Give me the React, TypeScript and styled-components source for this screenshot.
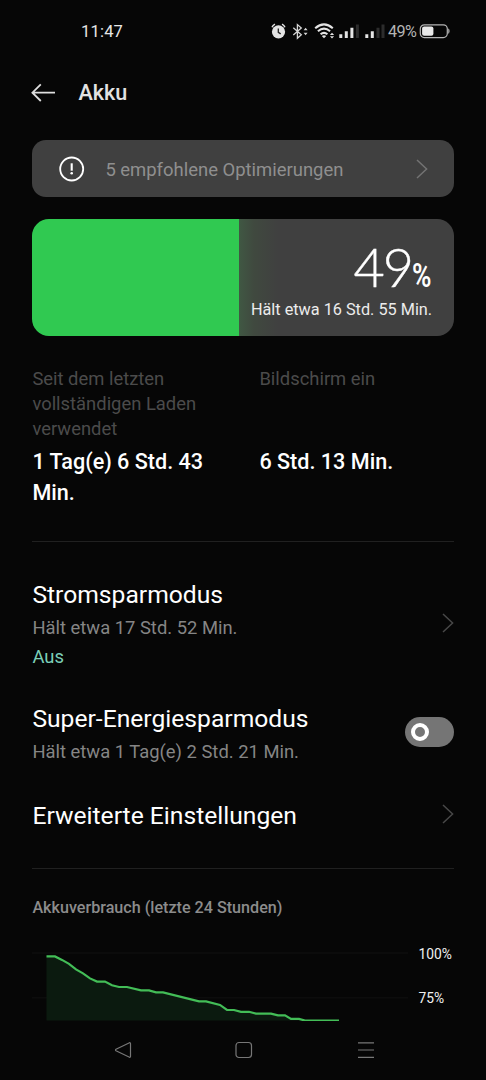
import React from 'react';
import styled, { createGlobalStyle } from 'styled-components';

const Global = createGlobalStyle`
  * { box-sizing: border-box; }
  html, body { margin: 0; background: #060606; }
  svg { display: block; flex: none; }
`;

const Screen = styled.main`
  width: 486px;
  height: 1080px;
  overflow: hidden;
  display: flex;
  flex-direction: column;
  background: #060606;
  color: #fff;
  font-family: Roboto, "Liberation Sans", sans-serif;
`;

const StatusBar = styled.div`
  height: 62px;
  flex: none;
  display: flex;
  align-items: center;
  justify-content: space-between;
  padding: 0 35px 0 81px;
`;

const Clock = styled.span`
  font-size: 16.5px;
  letter-spacing: 0.2px;
  color: #e6e6e6;
`;

const StatusIcons = styled.div`
  display: flex;
  align-items: center;
`;

const StatusPercent = styled.span`
  font-size: 16.2px;
  width: 31px;
  letter-spacing: -0.6px;
  color: #b4b4b4;
`;

const Header = styled.header`
  height: 62px;
  flex: none;
  display: flex;
  align-items: center;
  gap: 22.5px;
  padding-left: 31px;
`;

const Title = styled.h1`
  margin: 0;
  font-size: 21.6px;
  line-height: 26px;
  font-weight: 500;
  color: #e2e2e2;
`;

const Content = styled.div`
  display: flex;
  flex-direction: column;
  flex: none;
  padding: 16px 32.4px 0;
`;

const Banner = styled.div`
  height: 57.4px;
  display: flex;
  align-items: center;
  padding: 0 26px 0 26.2px;
  border-radius: 14px;
  background: #404040;
`;

const BannerText = styled.span`
  flex: 1;
  margin-left: 20.8px;
  font-size: 18.45px;
  line-height: 24px;
  padding-top: 2px;
  color: #8f8f8f;
`;

const BatteryCard = styled.section`
  height: 117px;
  margin-top: 22px;
  display: flex;
  flex-direction: column;
  align-items: flex-end;
  padding: 21px 21.5px 0 0;
  border-radius: 17px;
  background: linear-gradient(
    90deg,
    #30c951 0 207px,
    #405843 207px,
    #40493f 222px,
    #404040 246px
  );
`;

const Level = styled.div`
  display: flex;
  align-items: baseline;
  height: 54px;
  line-height: 54px;
`;

const LevelNumber = styled.span`
  font-family: Lato, Roboto, sans-serif;
  font-size: 54px;
  font-weight: 300;
  letter-spacing: -2px;
  -webkit-text-stroke: 0.4px #fff;
`;

const LevelUnit = styled.span`
  width: 20px;
  font-family: Roboto, sans-serif;
  font-size: 33px;
  font-weight: 600;
  transform: scaleX(0.8);
  transform-origin: left;
`;

const Remaining = styled.div`
  font-size: 16.25px;
  line-height: 24px;
  margin-top: 3.5px;
  color: #ececec;
`;

const Stats = styled.section`
  display: grid;
  grid-template-columns: 227px 1fr;
  margin-top: 29.8px;
`;

const Stat = styled.div<{ $width: number }>`
  display: flex;
  flex-direction: column;
  max-width: ${(p) => p.$width}px;
`;

const StatLabel = styled.div`
  height: 79.5px;
  font-size: 18.4px;
  line-height: 25px;
  color: #4b4b4b;
`;

const StatValue = styled.div`
  font-size: 21.6px;
  line-height: 31.5px;
  font-weight: 500;
`;

const Divider = styled.hr<{ $top: number }>`
  width: 100%;
  height: 1px;
  border: 0;
  margin: ${(p) => p.$top}px 0 0;
  background: #202020;
`;

const Row = styled.div<{ $top: number }>`
  display: flex;
  align-items: center;
  justify-content: space-between;
  margin-top: ${(p) => p.$top}px;
`;

const RowText = styled.div`
  display: flex;
  flex-direction: column;
`;

const RowAction = styled.div<{ $lift?: number }>`
  padding-bottom: ${(p) => p.$lift ?? 3}px;
`;

const RowTitle = styled.div`
  font-size: 24.65px;
  line-height: 36px;
`;

const RowSub = styled.div`
  font-size: 18.4px;
  line-height: 29.5px;
  color: #858585;
`;

const RowState = styled(RowSub)`
  color: #7bcfb8;
`;

const Switch = styled.div`
  width: 49px;
  height: 30px;
  display: flex;
  align-items: center;
  padding-left: 6px;
  border-radius: 15px;
  background: #757575;
`;

const Knob = styled.span`
  width: 18px;
  height: 18px;
  border-radius: 50%;
  border: 4px solid #fff;
`;

const ChartTitle = styled.h2`
  margin: 27px 0 0;
  font-size: 16.15px;
  line-height: 24px;
  font-weight: 500;
  color: #8c8c8c;
`;

const Chart = styled.div`
  display: flex;
  margin-top: 24.2px;
`;

const ChartLabels = styled.div`
  display: flex;
  flex-direction: column;
  margin-left: 10px;
  padding-top: 0.8px;
  font-size: 13.8px;
  line-height: 18px;
  gap: 26.2px;
  color: #f0f0f0;
`;

const NavBar = styled.nav`
  flex: 1;
  display: flex;
  align-items: center;
  justify-content: center;
  gap: 103.6px;
  padding-left: 2.6px;
`;

const Chevron = ({ color = '#484848' }: { color?: string }) => (
  <svg width="12" height="20" viewBox="0 0 12 20" fill="none" stroke={color} strokeWidth="1.5">
    <path d="M1 1l9.6 9L1 19" />
  </svg>
);

const points: [number, number][] = [
  [46.5, 956], [55, 956], [62, 959.5], [69, 963.5], [76, 969], [83, 973], [90, 978], [97, 981.2],
  [105, 981.2], [112, 984.8], [119, 986.6], [127, 986.6], [141, 990], [149, 990], [156, 992],
  [163, 992], [199, 1001], [206, 1001], [220, 1004.5], [227, 1009.6], [234, 1009.6], [241, 1011.4],
  [249, 1011.4], [256, 1013.2], [271, 1013.2], [278, 1015], [285, 1015], [291, 1018.5],
  [299, 1018.5], [305, 1020.2], [339, 1020.2],
];
const line = points.map(([x, y]) => `${x - 32},${y - 943.6}`).join(' ');

export default function App() {
  return (
    <Screen>
      <Global />
      <StatusBar>
        <Clock>11:47</Clock>
        <StatusIcons>
          <svg width="118" height="20" viewBox="270 21 118 20" fill="none">
            <circle cx="278.5" cy="31.8" r="6.6" fill="#e4e4e4" />
            <path d="M278.3 28.5v3.8l2.4 1.6" stroke="#222" strokeWidth="1.3" />
            <path d="M272 27.3q.8-2.2 3-3.2M285 27.3q-.8-2.2-3-3.2" stroke="#e4e4e4" strokeWidth="1.4" />
            <path d="M293.3 27.8l8 7-3.9 3.4V24.6l3.9 3.4-8 7" stroke="#d4d4d4" strokeWidth="1.3" />
            <path d="M303.6 30.2l2-2.4 2 2.400zM303.600 32.800l2 2.400 2-2.400z" fill="#d4d4d4" />
            <g stroke="#e4e4e4" strokeWidth="2.1">
              <path d="M315.2 28.2q8.8-7.6 17.6 0M317.9 31.3q6.100-5.200 12.200 0M320.600 34.200q3.400-2.800 6.800 0" />
            </g>
            <path d="M321.800 36q2.200-1.500 4.400 0l-2.200 2.300z" fill="#e4e4e4" />
            <path d="M329.900 35l2.100-2.300 2.100 2.300zM329.900 36.300l2.100 2.300 2.100-2.300z" fill="#e4e4e4" />
            <g fill="#e4e4e4">
              <path d="M339.300 34.300h3v3.800h-3zM344.800 31.300h3v6.800h-3zM350.400 27.800h3v10.300h-3z" />
              <path d="M365.300 34.300h3v3.800h-3zM370.800 31.300h3v6.800h-3z" />
            </g>
            <path d="M355.900 24.500h3v13.600h-3zM376.500 27.800h3v10.300h-3zM381.500 24.500h3v13.600h-3z" fill="#2c2c2c" />
          </svg>
          <StatusPercent>49%</StatusPercent>
          <svg width="32" height="16" viewBox="0 0 32 16" fill="none">
            <rect x="1.300" y="1.800" width="27" height="12.800" rx="4" stroke="#b4b4b4" strokeWidth="1.200" />
            <rect x="3.100" y="3.600" width="11.300" height="9.200" rx="2" fill="#e8e8e8" />
            <path d="M29.600 5.800q1.400 2.300 0 4.600z" fill="#b4b4b4" stroke="#b4b4b4" strokeWidth=".6" />
          </svg>
        </StatusIcons>
      </StatusBar>

      <Header>
        <svg width="25" height="20" viewBox="0 0 25 20" fill="none" stroke="#dedede" strokeWidth="1.800">
          <path d="M24 9.700H1.600M9.800 1.400L1.400 9.700l8.400 8.300" />
        </svg>
        <Title>Akku</Title>
      </Header>

      <Content>
        <Banner>
          <svg width="26" height="26" viewBox="0 0 26 26" fill="none">
            <circle cx="12.700" cy="13" r="11.500" stroke="#fff" strokeWidth="1.800" />
            <path d="M12.700 7.300v7.400" stroke="#fff" strokeWidth="2.100" />
            <circle cx="12.700" cy="17.300" r="1.300" fill="#fff" />
          </svg>
          <BannerText>5 empfohlene Optimierungen</BannerText>
          <Chevron color="#737373" />
        </Banner>

        <BatteryCard>
          <Level>
            <LevelNumber>49</LevelNumber>
            <LevelUnit>%</LevelUnit>
          </Level>
          <Remaining>Hält etwa 16 Std. 55 Min.</Remaining>
        </BatteryCard>

        <Stats>
          <Stat $width={190}>
            <StatLabel>Seit dem letzten vollständigen Laden verwendet</StatLabel>
            <StatValue>1 Tag(e) 6 Std. 43 Min.</StatValue>
          </Stat>
          <Stat $width={194}>
            <StatLabel>Bildschirm ein</StatLabel>
            <StatValue>6 Std. 13 Min.</StatValue>
          </Stat>
        </Stats>

        <Divider $top={32.3} />

        <Row $top={35}>
          <RowText>
            <RowTitle>Stromsparmodus</RowTitle>
            <RowSub>Hält etwa 17 Std. 52 Min.</RowSub>
            <RowState>Aus</RowState>
          </RowText>
          <RowAction>
            <Chevron />
          </RowAction>
        </Row>

        <Row $top={29.5}>
          <RowText>
            <RowTitle>Super-Energiesparmodus</RowTitle>
            <RowSub>Hält etwa 1 Tag(e) 2 Std. 21 Min.</RowSub>
          </RowText>
          <RowAction $lift={4}>
            <Switch>
              <Knob />
            </Switch>
          </RowAction>
        </Row>

        <Row $top={31}>
          <RowTitle>Erweiterte Einstellungen</RowTitle>
          <RowAction>
            <Chevron />
          </RowAction>
        </Row>

        <Divider $top={34} />

        <ChartTitle>Akkuverbrauch (letzte 24 Stunden)</ChartTitle>
        <Chart>
          <svg width="376" height="76.500" viewBox="0 0 376 76.500" fill="none">
            <path d="M0 9h376M0 53.800h376" stroke="#111" />
            <polygon points={`14.500,76.500 ${line} 307,76.500`} fill="#0b1a0f" />
            <polyline points={line} stroke="#43bd57" strokeWidth="2.200" />
          </svg>
          <ChartLabels>
            <span>100%</span>
            <span>75%</span>
          </ChartLabels>
        </Chart>
      </Content>

      <NavBar>
        <svg width="18" height="18" viewBox="0 0 18 18" fill="none" stroke="#777" strokeWidth="1.200">
          <path d="M15.500 1.700L2 8.200q-1 .8 0 1.600l13.500 6.500q1 .2 1-1V2.700q0-1.200-1-1z" />
        </svg>
        <svg width="18" height="18" viewBox="0 0 18 18" fill="none" stroke="#777" strokeWidth="1.200">
          <rect x="1" y="1.500" width="15.500" height="15" rx="3" />
        </svg>
        <svg width="18" height="18" viewBox="0 0 18 18" fill="none" stroke="#777" strokeWidth="1.200">
          <path d="M1 1.800h16M1 9h16M1 16.300h16" />
        </svg>
      </NavBar>
    </Screen>
  );
}
